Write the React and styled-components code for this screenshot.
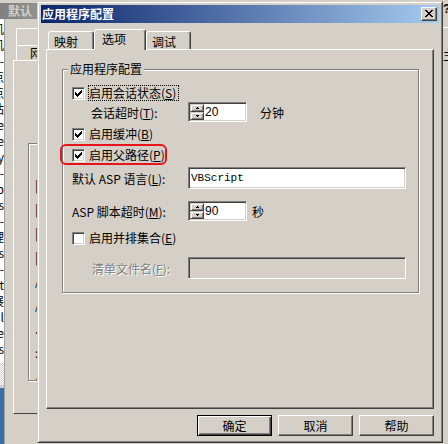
import React from 'react';
import styled, { createGlobalStyle } from 'styled-components';

const GlobalStyle = createGlobalStyle`
  html, body {
    margin: 0;
    padding: 0;
    background: #d4d0c8;
  }
  body {
    font-family: "Noto Sans CJK SC", "Liberation Sans", sans-serif;
    font-size: 12px;
    color: #000;
  }
  * { box-sizing: border-box; }
`;

const Desktop = styled.div`
  position: relative;
  width: 448px;
  height: 444px;
  overflow: hidden;
  background: #d4d0c8;
`;

/* ---------- pixel glyphs ---------- */
const Pixels = ({ rows, w, h, color = '#000' }) => (
  <svg width={w} height={h} viewBox={`0 0 ${w} ${h}`} shapeRendering="crispEdges" style={{ display: 'block' }}>
    {rows.flatMap((r, y) =>
      [...r].map((c, x) =>
        c === 'X' ? <rect key={`${x}-${y}`} x={x} y={y} width="1" height="1" fill={color} /> : null
      )
    )}
  </svg>
);

const CHECK = ['......X', '.....XX', 'X...XXX', 'XX.XXX.', 'XXXXX..', '.XXX...', '..X....'];
const CLOSE = ['XX....XX', '.XX..XX.', '..XXXX..', '...XX...', '..XXXX..', '.XX..XX.', 'XX....XX'];
const UP = ['.X.', 'XXX'];
const DOWN = ['XXX', '.X.'];

/* ---------- background window (left) ---------- */
const BackWindow = styled.div`
  position: absolute;
  left: 0;
  top: 0;
  width: 140px;
  height: 444px;
  padding-top: 3px;
  display: flex;
  flex-direction: column;
  background: #d4d0c8;
`;
const BackTitle = styled.div`
  height: 16px;
  line-height: 16px;
  padding-left: 8px;
  background: linear-gradient(to right, #808080, #c0c0c0);
  color: #d4d0c8;
  font-weight: bold;
  white-space: pre;
`;
const BackBody = styled.div`
  flex: 1;
  display: flex;
`;
const Strip = styled.div`
  width: 4px;
  display: flex;
  flex-direction: column;
`;
const TreeList = styled.div`
  height: 344px;
  background: #fff;
  overflow: hidden;
  padding-top: 2px;
`;
const TreeLine = styled.div`
  height: 16px;
  display: flex;
  justify-content: flex-end;
  white-space: nowrap;
  line-height: 16px;
`;
const Dither = styled.div`
  height: 22px;
  background: repeating-conic-gradient(#ffffff 0 25%, #d4d0c8 0 50%) 0 0 / 2px 2px;
`;
const DeskBlue = styled.div`
  flex: 1;
  margin-top: 3px;
  background: #3a6ea5;
`;
const StripEdge = styled.div`
  width: 1px;
  background: #a0a0a0;
`;
const BackSheet = styled.div`
  flex: 1;
  padding: 9px 0 0 8px;
  display: flex;
  flex-direction: column;
`;
const BackTab = styled.div`
  height: ${(p) => p.$h}px;
  margin-left: 3px;
  padding-left: ${(p) => p.$pad}px;
  border-top: 1px solid #fff;
  border-left: 1px solid #fff;
  line-height: ${(p) => p.$h - 2}px;
  white-space: nowrap;
`;
const BackPanel = styled.div`
  height: 354px;
  border-left: 1px solid #fff;
  border-top: 1px solid #fff;
  border-bottom: 1px solid #404040;
  padding: 82px 0 0 14px;
`;
const BackGroup = styled.div`
  height: 238px;
  border: 1px solid #808080;
  box-shadow: inset 1px 1px #fff, 1px 1px #fff;
  padding: 8px 0 0 6px;
  overflow: hidden;
`;
const BackLabel = styled.div`
  height: 24px;
  white-space: nowrap;
`;

/* ---------- background window (right) ---------- */
const RightWindow = styled.div`
  position: absolute;
  left: 443px;
  top: 0;
  width: 40px;
  height: 444px;
  background: #d4d0c8;
  display: flex;
  flex-direction: column;
`;
const HelpGlyph = styled.div`
  margin-top: 2px;
  height: 14px;
  font-family: "Liberation Sans", sans-serif;
  font-weight: bold;
  font-size: 12px;
  line-height: 14px;
`;
const RightTabs = styled.div`
  margin-top: 11px;
  height: 10px;
  border-top: 1px solid #fff;
`;
const RightLabel = styled.div`
  margin-top: 9px;
  white-space: nowrap;
`;

/* ---------- front dialog ---------- */
const Dialog = styled.div`
  position: absolute;
  left: 37px;
  top: 1px;
  width: 406px;
  height: 442px;
  display: flex;
  flex-direction: column;
  background: #d4d0c8;
  border: 1px solid;
  border-color: #d4d0c8 #404040 #404040 #d4d0c8;
  box-shadow: inset 1px 1px #fff, inset -1px -1px #808080;
  padding: 3px;
`;
const TitleBar = styled.div`
  height: 18px;
  flex: none;
  display: flex;
  align-items: center;
  justify-content: space-between;
  padding: 0 2px 0 1px;
  background: linear-gradient(to right, #0a246a, #a6caf0);
  color: #fff;
  font-weight: bold;
  line-height: 18px;
`;
const CloseBtn = styled.div`
  width: 16px;
  height: 14px;
  display: flex;
  align-items: center;
  justify-content: center;
  padding: 0 1px 1px 0;
  background: #d4d0c8;
  border: 1px solid;
  border-color: #fff #404040 #404040 #fff;
  box-shadow: inset -1px -1px #808080;
`;
const Body = styled.div`
  flex: 1;
  display: flex;
  flex-direction: column;
  padding: 6px 5px 0 5px;
`;
const TabStrip = styled.div`
  height: 20px;
  display: flex;
  align-items: flex-end;
  padding-left: 2px;
`;
const Tab = styled.div`
  position: relative;
  width: ${(p) => p.$w}px;
  height: ${(p) => (p.$active ? 21 : 18)}px;
  margin-bottom: ${(p) => (p.$active ? -1 : 0)}px;
  z-index: ${(p) => (p.$active ? 1 : 0)};
  padding-left: ${(p) => (p.$active ? 7 : 5)}px;
  padding-top: ${(p) => (p.$active ? 2 : 3)}px;
  line-height: 14px;
  background: #d4d0c8;
  border: 1px solid;
  border-bottom: none;
  border-color: #fff #404040 transparent #fff;
  border-radius: 3px 3px 0 0;
  box-shadow: inset -1px 0 #808080;
`;
const Panel = styled.div`
  height: 360px;
  flex: none;
  border: 1px solid;
  border-color: #fff #404040 #404040 #fff;
  box-shadow: inset -1px -1px #808080;
  padding: 12px 14px 0 15px;
`;
const GroupBox = styled.div`
  margin-top: 7px;
  border: 1px solid #808080;
  box-shadow: inset 1px 1px #fff, 1px 1px #fff;
  padding: 0 0 13px 9px;
  display: flex;
  flex-direction: column;
`;
const Legend = styled.div`
  align-self: flex-start;
  margin: -8px 0 0 -4px;
  padding: 0 2px;
  height: 14px;
  line-height: 14px;
  background: #d4d0c8;
`;
const Row = styled.div`
  position: relative;
  display: flex;
  align-items: center;
  height: ${(p) => p.$h}px;
  margin-top: ${(p) => p.$mt}px;
`;
const FieldRow = styled(Row)`
  display: grid;
  grid-template-columns: 116px auto auto;
  justify-content: start;
`;
const CheckBox = styled.div`
  width: 13px;
  height: 13px;
  flex: none;
  display: flex;
  align-items: center;
  justify-content: center;
  background: #fff;
  border: 1px solid;
  border-color: #808080 #fff #fff #808080;
  box-shadow: inset 1px 1px #404040, inset -1px -1px #d4d0c8;
`;
const CheckLabel = styled.span`
  margin-left: 3px;
  height: 16px;
  line-height: 14px;
  padding: 0 2px 0 0;
  border: 1px ${(p) => (p.$focus ? 'dotted #000' : 'solid transparent')};
  white-space: nowrap;
`;
const FieldLabel = styled.span`
  padding-left: ${(p) => p.$indent}px;
  white-space: nowrap;
  color: ${(p) => (p.$disabled ? '#808080' : '#000')};
  text-shadow: ${(p) => (p.$disabled ? '1px 1px 0 #fff' : 'none')};
`;
const Sunken = styled.div`
  width: ${(p) => p.$w}px;
  height: ${(p) => p.$h}px;
  display: flex;
  align-items: center;
  background: ${(p) => (p.$disabled ? '#d4d0c8' : '#fff')};
  border: 1px solid;
  border-color: #808080 #fff #fff #808080;
  box-shadow: inset 1px 1px #404040, inset -1px -1px #d4d0c8;
  padding: 1px;
`;
const Spins = styled.div`
  width: 14px;
  height: 100%;
  display: flex;
  flex-direction: column;
`;
const SpinBtn = styled.div`
  flex: 1;
  display: flex;
  align-items: center;
  justify-content: center;
  background: #d4d0c8;
  border: 1px solid;
  border-color: #d4d0c8 #404040 #404040 #d4d0c8;
  box-shadow: inset 1px 1px #fff, inset -1px -1px #808080;
`;
const SpinValue = styled.span`
  padding-left: 1px;
  font-family: "Liberation Sans", sans-serif;
  font-size: 12px;
`;
const FieldText = styled.span`
  padding-left: 1px;
  font-family: "Liberation Mono", monospace;
  font-size: 11px;
`;
const Unit = styled.span`
  margin-left: ${(p) => p.$gap}px;
  white-space: nowrap;
`;
const Highlight = styled.div`
  position: absolute;
  left: -12px;
  top: -3px;
  width: 107px;
  height: 21px;
  border: 2px solid #e8141c;
  border-radius: 6px;
  pointer-events: none;
`;
const ButtonRow = styled.div`
  display: flex;
  justify-content: flex-end;
  gap: 6px;
  margin-top: 6px;
`;
const Button = styled.div`
  width: 75px;
  height: 21px;
  display: flex;
  align-items: center;
  justify-content: center;
  background: #d4d0c8;
  border: 1px solid;
  border-color: ${(p) => (p.$default ? '#000' : '#fff #404040 #404040 #fff')};
  box-shadow: ${(p) =>
    p.$default
      ? 'inset 1px 1px #fff, inset -1px -1px #404040, inset -2px -2px #808080'
      : 'inset -1px -1px #808080'};
`;

const Key = ({ k }) => (
  <>
    (<u>{k}</u>)
  </>
);

const Check = ({ children, focus }) => (
  <>
    <CheckBox>{focus !== null && <Pixels rows={CHECK} w={7} h={7} />}</CheckBox>
    <CheckLabel $focus={focus}>{children}</CheckLabel>
  </>
);

const Spinner = ({ value }) => (
  <Sunken $w={59} $h={20}>
    <Spins>
      <SpinBtn>
        <Pixels rows={UP} w={3} h={2} />
      </SpinBtn>
      <SpinBtn>
        <Pixels rows={DOWN} w={3} h={2} />
      </SpinBtn>
    </Spins>
    <SpinValue>{value}</SpinValue>
  </Sunken>
);

const treeLines = [
  '我的计算机', '本地计算机', '-', 'Web 站点', '默认 FTP 站点', '默认网站', 'Site', 'Site',
  'Directory', '-', 'IISHelp', 'Printers', '-', '- 管理', 'Scripts', '-', '_vti_pvt', '展',
  'Mail', '_private', 'docs',
];
const backLabels = ['· 连接', '| 超时', '| 限制', '| 保持', '| 启用', '/ 日志', '/ 活动', '... 格式', ': 属性', '/ 扩展'];

export default function App() {
  return (
    <>
      <GlobalStyle />
      <Desktop>
        <BackWindow>
          <BackTitle>默认  Web 站点属性</BackTitle>
          <BackBody>
            <Strip>
              <TreeList>
                {treeLines.map((t, i) => (
                  <TreeLine key={i}>{t}</TreeLine>
                ))}
              </TreeList>
              <Dither />
              <DeskBlue />
            </Strip>
            <StripEdge />
            <BackSheet>
              <BackTab $h={17} $pad={18}>
                · 目录安全性
              </BackTab>
              <BackTab $h={15} $pad={13}>
                网站
              </BackTab>
              <BackPanel>
                <BackGroup>
                  {backLabels.map((t, i) => (
                    <BackLabel key={i}>{t}</BackLabel>
                  ))}
                </BackGroup>
              </BackPanel>
            </BackSheet>
          </BackBody>
        </BackWindow>

        <RightWindow>
          <HelpGlyph>?</HelpGlyph>
          <RightTabs />
          <RightLabel>主目录</RightLabel>
        </RightWindow>

        <Dialog>
          <TitleBar>
            <span>应用程序配置</span>
            <CloseBtn>
              <Pixels rows={CLOSE} w={8} h={7} />
            </CloseBtn>
          </TitleBar>
          <Body>
            <TabStrip>
              <Tab $w={46}>映射</Tab>
              <Tab $w={52} $active>
                选项
              </Tab>
              <Tab $w={45}>调试</Tab>
            </TabStrip>
            <Panel>
              <GroupBox>
                <Legend>应用程序配置</Legend>
                <Row $h={16} $mt={9}>
                  <Check focus>
                    启用会话状态<Key k="S" />
                  </Check>
                </Row>
                <FieldRow $h={20} $mt={1}>
                  <FieldLabel $indent={19}>
                    会话超时<Key k="T" />:
                  </FieldLabel>
                  <Spinner value="20" />
                  <Unit $gap={13}>分钟</Unit>
                </FieldRow>
                <Row $h={16} $mt={4}>
                  <Check focus={false}>
                    启用缓冲<Key k="B" />
                  </Check>
                </Row>
                <Row $h={16} $mt={5}>
                  <Check focus={false}>
                    启用父路径<Key k="P" />
                  </Check>
                  <Highlight />
                </Row>
                <FieldRow $h={22} $mt={4}>
                  <FieldLabel $indent={0}>
                    默认 ASP 语言<Key k="L" />:
                  </FieldLabel>
                  <Sunken $w={218} $h={22}>
                    <FieldText>VBScript</FieldText>
                  </Sunken>
                </FieldRow>
                <FieldRow $h={20} $mt={12}>
                  <FieldLabel $indent={0}>
                    ASP 脚本超时<Key k="M" />:
                  </FieldLabel>
                  <Spinner value="90" />
                  <Unit $gap={5}>秒</Unit>
                </FieldRow>
                <Row $h={16} $mt={9}>
                  <Check focus={null}>
                    启用并排集合<Key k="E" />
                  </Check>
                </Row>
                <FieldRow $h={22} $mt={11}>
                  <FieldLabel $indent={20} $disabled>
                    清单文件名<Key k="F" />:
                  </FieldLabel>
                  <Sunken $w={218} $h={22} $disabled />
                </FieldRow>
              </GroupBox>
            </Panel>
            <ButtonRow>
              <Button $default>确定</Button>
              <Button>取消</Button>
              <Button>帮助</Button>
            </ButtonRow>
          </Body>
        </Dialog>
      </Desktop>
    </>
  );
}
